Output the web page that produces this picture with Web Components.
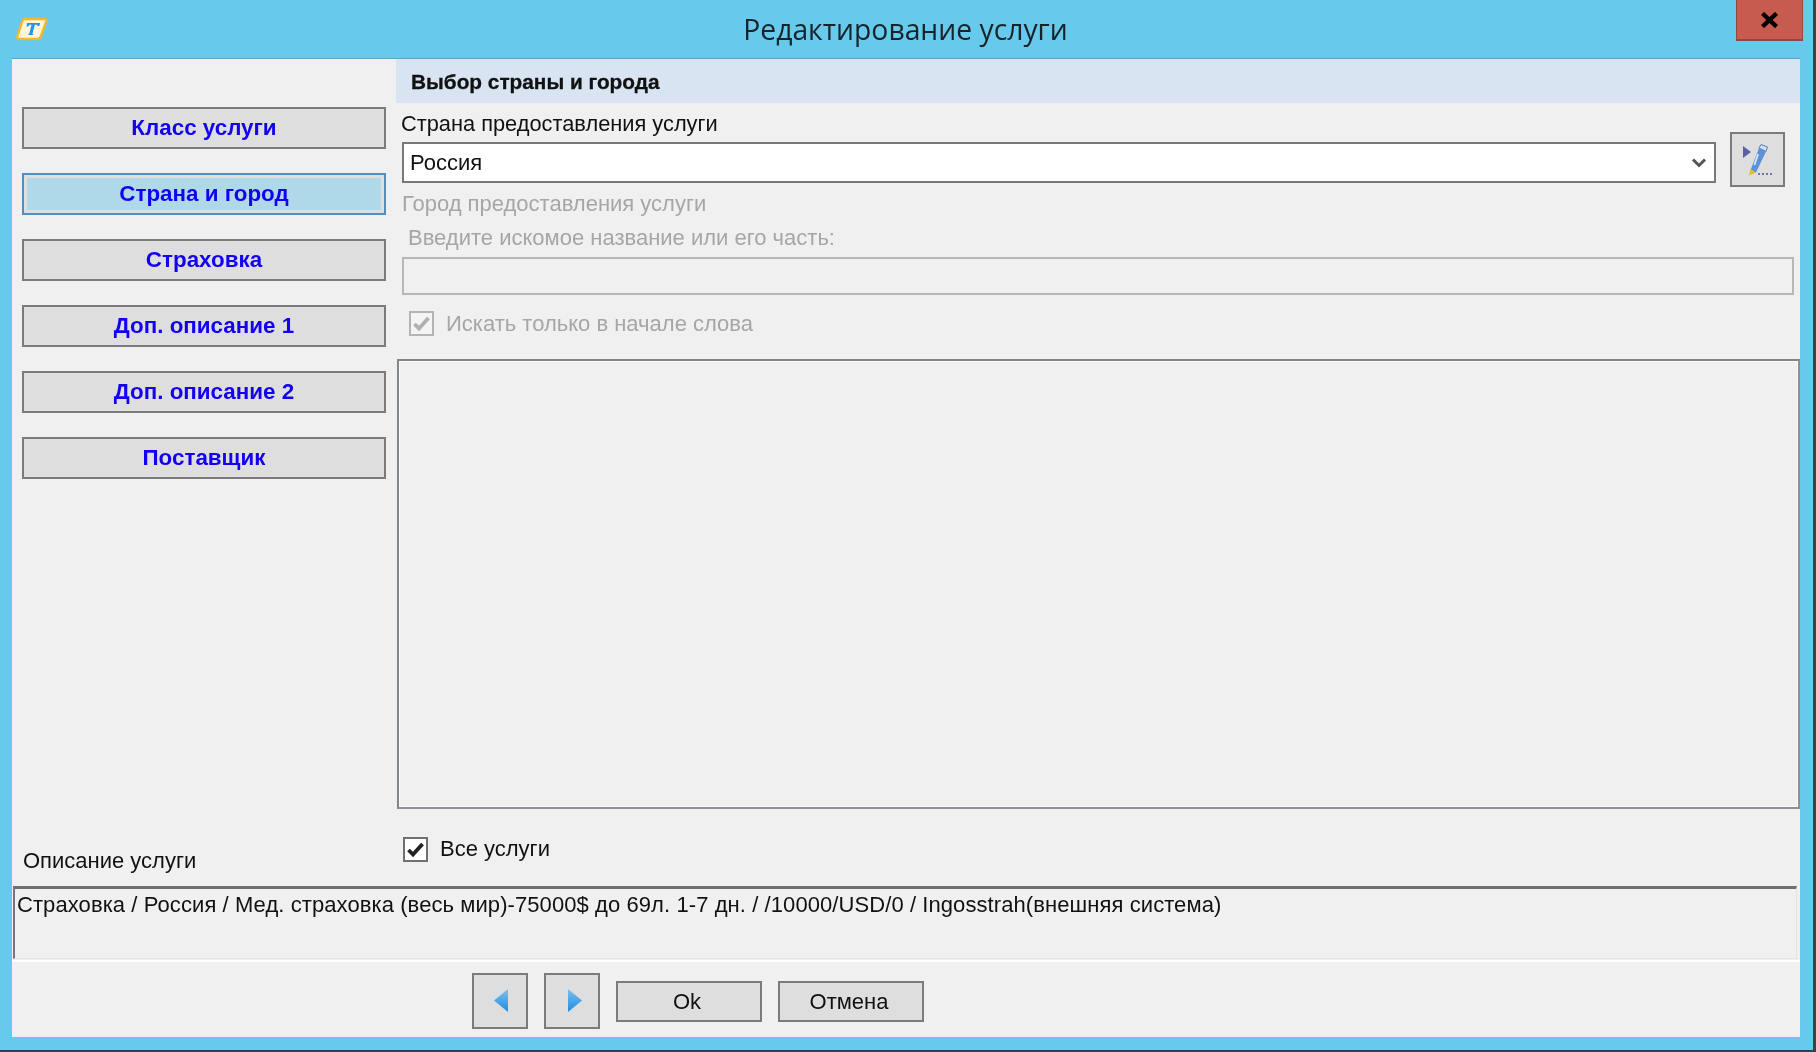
<!DOCTYPE html>
<html lang="ru">
<head>
<meta charset="utf-8">
<title>Редактирование услуги</title>
<style>
  html, body { margin: 0; padding: 0; background: #67c9ec; }
  body { font: 22px "Liberation Sans", Arial, sans-serif; color: #111; }
</style>
</head>
<body>
<edit-window caption="Редактирование услуги">
  <side-tab slot="tabs">Класс услуги</side-tab>
  <side-tab slot="tabs" active>Страна и город</side-tab>
  <side-tab slot="tabs">Страховка</side-tab>
  <side-tab slot="tabs">Доп. описание 1</side-tab>
  <side-tab slot="tabs">Доп. описание 2</side-tab>
  <side-tab slot="tabs">Поставщик</side-tab>

  <section-title slot="panel">Выбор страны и города</section-title>
  <country-row slot="panel" label="Страна предоставления услуги" value="Россия"></country-row>
  <city-search slot="panel"></city-search>
  <result-list slot="panel"></result-list>

  <check-box slot="all" checked>Все услуги</check-box>
  <span slot="description-label">Описание услуги</span>
  <span slot="description">Страховка / Россия / Мед. страховка (весь мир)-75000$ до 69л. 1-7 дн. / /10000/USD/0 / Ingosstrah(внешняя система)</span>

  <icon-button slot="actions" dir="prev"></icon-button>
  <icon-button slot="actions" dir="next"></icon-button>
  <push-button slot="actions">Ok</push-button>
  <push-button slot="actions">Отмена</push-button>
</edit-window>

<script>
class BaseElement extends HTMLElement {
  get html() { return ``; }
  get css() { return ``; }

  constructor() {
    super();
    this.attachShadow({ mode: 'open' });
  }

  connectedCallback() {
    this.shadowRoot.innerHTML = `<style>${this.css}</style>${this.html}`;
  }
}

class EditWindow extends BaseElement {
  get css() {
    return `
      :host { display: block; width: 1816px; height: 1052px; box-sizing: border-box;
        background: #67c9ec; border-right: 3px solid #3a4347; border-bottom: 2px solid #24444f;
        overflow: hidden; filter: blur(0.45px); }
      .title { height: 59px; display: flex; align-items: flex-start; position: relative; }
      .logo { margin: 17px 0 0 16px; }
      .caption { position: absolute; left: 0; width: 1811px; top: 10px; text-align: center;
        font: 28.3px/38px "Open Sans", sans-serif; color: #16242a; }
      .close { position: absolute; left: 1736px; top: 0; width: 67px; height: 41px; box-sizing: border-box;
        background: #c75b4f; border: 1px solid #8d4a44; border-top: 0; border-bottom-width: 2px;
        display: flex; align-items: center; justify-content: center; }
      .client { height: 978px; margin: 0 13px 0 12px; background: #f0f0f0; display: flex; flex-direction: column;
        box-shadow: 0 -1px 0 #58a9c8; position: relative; }
      .main { height: 827px; display: flex; }
      .left { width: 384px; flex: none; box-sizing: border-box; padding: 48px 0 0 10px;
        display: flex; flex-direction: column; }
      .tabs { display: flex; flex-direction: column; gap: 24px; }
      .desc-label { margin-top: auto; padding: 0 0 13px 1px; line-height: 24px; }
      .right { flex: 1; display: flex; flex-direction: column; min-width: 0; }
      .all { padding: 27px 0 0 7px; }
      .description { height: 73px; margin: 0 3px 0 1px; box-sizing: border-box; padding: 4px 0 0 2px;
        border-top: 3px solid #6f6f6f; border-left: 2px solid #777; border-right: 1px solid #e4e4e4;
        border-bottom: 1px solid #e6e6e6; line-height: 24px; white-space: nowrap; letter-spacing: 0.08px; }
      .actions { flex: 1; border-top: 2px solid #fff; display: flex; align-items: center;
        padding: 0 0 0 460px; gap: 16px; margin-top: 1px; }
    `;
  }
  get html() {
    return `
      <div class="title">
        <svg class="logo" width="32" height="24" viewBox="0 0 32 24">
          <path d="M9 2 H29 Q31 2 30 5 L25 19 Q24 22 21 22 H3 Q0.500 22 1.500 19 L6 5 Q7 2 9 2Z" fill="#fff6d8" stroke="#f5b730" stroke-width="2.400"/>
          <path d="M11 6 H24 L23.400 9 H21.500 L21 7.800 H18.800 L16.400 17 L18 18 H11.500 L13.200 17 L15.500 7.800 H13.400 L12 9.500 H10.500Z" fill="#1e96ec"/>
        </svg>
        <div class="caption">${this.getAttribute('caption')}</div>
        <div class="close">
          <svg width="19" height="16" viewBox="0 0 19 16"><path d="M2.500 1.500 L16.500 14.500 M16.500 1.500 L2.500 14.500" stroke="#000" stroke-width="4.400"/></svg>
        </div>
      </div>
      <div class="client">
        <div class="main">
          <div class="left">
            <div class="tabs"><slot name="tabs"></slot></div>
            <div class="desc-label"><slot name="description-label"></slot></div>
          </div>
          <div class="right">
            <slot name="panel"></slot>
            <div class="all"><slot name="all"></slot></div>
          </div>
        </div>
        <div class="description"><slot name="description"></slot></div>
        <div class="actions"><slot name="actions"></slot></div>
      </div>
    `;
  }
}

class SideTab extends BaseElement {
  get css() {
    return `
      :host { display: block; width: 364px; height: 42px; box-sizing: border-box;
        border: 2px solid #7b7b7b; background: #dedede; color: #1400f0;
        font-weight: bold; text-align: center; line-height: 38px; font-size: 22.4px; }
      :host([active]) { border-color: #4f8fc4; background: #afd9e8;
        box-shadow: inset 0 0 0 3px #dedede; }
    `;
  }
  get html() { return `<slot></slot>`; }
}

class SectionTitle extends BaseElement {
  get css() {
    return `
      :host { display: block; height: 44px; box-sizing: border-box; padding-left: 15px;
        background: #d8e4f2; font-weight: bold; font-size: 20.8px; line-height: 45px; color: #111;
        -webkit-text-stroke: 0.3px #111; }
    `;
  }
  get html() { return `<slot></slot>`; }
}

class CountryRow extends BaseElement {
  get css() {
    return `
      :host { display: block; padding: 8px 0 0 5px; height: 84px; box-sizing: border-box; }
      .label { line-height: 25px; font-size: 21.8px; }
      .row { display: flex; align-items: flex-start; margin: -4px 0 0 1px; }
      .combo { width: 1314px; height: 41px; box-sizing: border-box; margin-top: 10px; border: 2px solid #787878;
        background: #fff; padding: 0 7px 0 6px; display: flex; align-items: center; justify-content: space-between; }
      .edit { width: 55px; height: 55px; box-sizing: border-box; margin-left: 14px;
        border: 2px solid #7b7b7b; background: #dedede; display: flex; align-items: center; justify-content: center; }
    `;
  }
  get html() {
    return `
      <div class="label">${this.getAttribute('label')}</div>
      <div class="row">
        <div class="combo">
          <span>${this.getAttribute('value')}</span>
          <svg width="16" height="12" viewBox="0 0 16 12"><path d="M2 2.500 L8 8.500 L14 2.500" fill="none" stroke="#555" stroke-width="3"/></svg>
        </div>
        <div class="edit">
          <svg width="32" height="34" viewBox="0 0 32 34">
            <path d="M1 3 L9 9 L1 15Z" fill="#5a5fa8"/>
            <path d="M9 26 L17 5 L24 8.500 L14 29.500 L8.500 31Z" fill="#5b92d8"/>
            <path d="M17 5 L19 1.500 L25.500 4 L24 8.500Z" fill="#cfe0f2" stroke="#5b7fb8"/>
            <path d="M16 11 L12.500 22" stroke="#dbe9f8" stroke-width="1.800"/>
            <path d="M8.500 26 L14 29.500 L7 32.500Z" fill="#e3c02c"/>
            <path d="M16 31 h2 M20 31 h2 M24 31 h2 M28 31 h2" stroke="#6a76b0" stroke-width="2"/>
          </svg>
        </div>
      </div>
    `;
  }
}

class CitySearch extends BaseElement {
  get css() {
    return `
      :host { display: block; height: 172px; box-sizing: border-box; padding: 4.500px 0 0 6px;
        color: #a6a6a6; line-height: 24px; }
      .hint { padding: 10px 0 0 6px; }
      .input { height: 38px; width: 1392px; box-sizing: border-box; margin-top: 7px;
        border: 2px solid #b4b8b8; background: #f0f0f0; }
      check-box { margin: 16px 0 0 7px; }
    `;
  }
  get html() {
    return `
      <div>Город предоставления услуги</div>
      <div class="hint">Введите искомое название или его часть:</div>
      <div class="input"></div>
      <check-box checked disabled>Искать только в начале слова</check-box>
    `;
  }
}

class CheckBox extends BaseElement {
  get css() {
    return `
      :host { display: flex; align-items: center; gap: 12px; line-height: 26px; }
      .box { width: 25px; height: 25px; box-sizing: border-box; border: 2px solid #707070; background: #fff;
        display: flex; align-items: center; justify-content: center; }
      :host([disabled]) .box { border-color: #b4b4b4; background: #f4f4f4; }
      path { stroke: #222; stroke-width: 3.800; }
      :host([disabled]) path { stroke: #b0b0b0; }
    `;
  }
  get html() {
    return `
      <span class="box"><svg width="17" height="15" viewBox="0 0 17 15"><path d="M1.500 8 L6 12.500 L15.500 2" fill="none"/></svg></span>
      <span><slot></slot></span>
    `;
  }
}

class ResultList extends BaseElement {
  get css() {
    return `
      :host { display: block; height: 450px; width: 1403px; margin-left: 1px; box-sizing: border-box;
        border: 2px solid #80858a; border-right-color: #8e9098; border-bottom-color: #8e9098;
        box-shadow: inset 0 0 0 1px #fafafa; background: #f0f0f0; }
    `;
  }
}

class PushButton extends BaseElement {
  get css() {
    return `
      :host { display: block; width: 146px; height: 41px; box-sizing: border-box; margin-top: 3px;
        border: 2px solid #7b7b7b; background: #dedede; text-align: center; line-height: 37px;
        padding-right: 4px; }
    `;
  }
  get html() { return `<slot></slot>`; }
}

class IconButton extends BaseElement {
  get css() {
    return `
      :host { display: flex; align-items: center; justify-content: center; width: 56px; height: 56px;
        box-sizing: border-box; border: 2px solid #7b7b7b; background: #dedede; margin-top: 2px; }
      :host([dir="prev"]) svg { margin-left: 2px; }
      :host([dir="next"]) svg { margin-left: 6px; }
    `;
  }
  get html() {
    const d = this.getAttribute('dir') === 'prev' ? 'M15 1 V24 L1 12.500Z' : 'M1 1 V24 L15 12.500Z';
    return `
      <svg width="16" height="25" viewBox="0 0 16 25">
        <defs><linearGradient id="g" x1="0" x2="0" y1="0" y2="1"><stop offset="0" stop-color="#7cc0f0"/><stop offset="1" stop-color="#1f8ce0"/></linearGradient></defs>
        <path d="${d}" fill="url(#g)"/>
      </svg>
    `;
  }
}

customElements.define('check-box', CheckBox);
customElements.define('side-tab', SideTab);
customElements.define('section-title', SectionTitle);
customElements.define('country-row', CountryRow);
customElements.define('city-search', CitySearch);
customElements.define('result-list', ResultList);
customElements.define('push-button', PushButton);
customElements.define('icon-button', IconButton);
customElements.define('edit-window', EditWindow);
</script>
</body>
</html>
